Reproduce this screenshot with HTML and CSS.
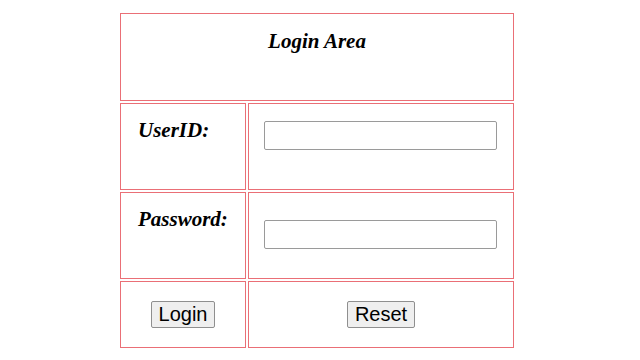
FILE: index.html
```html
<!DOCTYPE html>
<html lang="en">
<head>
  <meta charset="UTF-8">
  <meta name="viewport" content="width=device-width, initial-scale=1.0">
  <title>Login</title>
  <link rel="stylesheet" href="styles.css">
</head>
<body>
  <form class="login-form">
    <table class="login-table">
      <tr>
        <td class="head-cell" colspan="2">
          <h3 class="title">Login Area</h3>
        </td>
      </tr>
      <tr>
        <td class="label-cell"><h3 class="label">UserID:</h3></td>
        <td class="field-cell"><input class="field" type="text" name="userid"></td>
      </tr>
      <tr>
        <td class="label-cell"><h3 class="label">Password:</h3></td>
        <td class="field-cell field-cell-low"><input class="field" type="password" name="password"></td>
      </tr>
      <tr>
        <td class="btn-cell"><button class="btn" type="button">Login</button></td>
        <td class="btn-cell"><button class="btn" type="reset">Reset</button></td>
      </tr>
    </table>
  </form>
</body>
</html>
```

FILE: styles.css
```css
* {
  margin: 0;
  padding: 0;
  box-sizing: border-box;
}

body {
  background: #fff;
  font-family: "Liberation Serif", "Times New Roman", serif;
  color: #000;
}

.login-table {
  margin: 11px 0 0 118px;
  border-spacing: 2px;
  border-collapse: separate;
}

.login-table td {
  border: 1px solid #ea6f76;
  vertical-align: top;
}

.head-cell {
  width: 394px;
  height: 88px;
  padding-top: 15px;
  text-align: center;
}

.title,
.label {
  font-size: 21px;
  font-weight: bold;
  font-style: italic;
  line-height: 24px;
}

.label-cell {
  width: 126px;
  height: 87px;
  padding: 14px 0 0 17px;
}

.field-cell {
  width: 266px;
  height: 87px;
  padding: 17px 0 0 15px;
}

.field-cell-low {
  padding-top: 27px;
}

.field {
  display: block;
  width: 233px;
  height: 29px;
  border: 1px solid #9a9a9a;
  border-radius: 2px;
  background: #fff;
  font-size: 14px;
  outline: none;
}

.btn-cell {
  height: 67px;
  text-align: center;
  vertical-align: middle !important;
}

.btn {
  font-family: "Liberation Sans", Arial, sans-serif;
  font-size: 20px;
  line-height: 23px;
  padding: 1px 7px;
  color: #000;
  background: #efefef;
  border: 1px solid #8f8f8f;
  border-radius: 2px;
}
```
